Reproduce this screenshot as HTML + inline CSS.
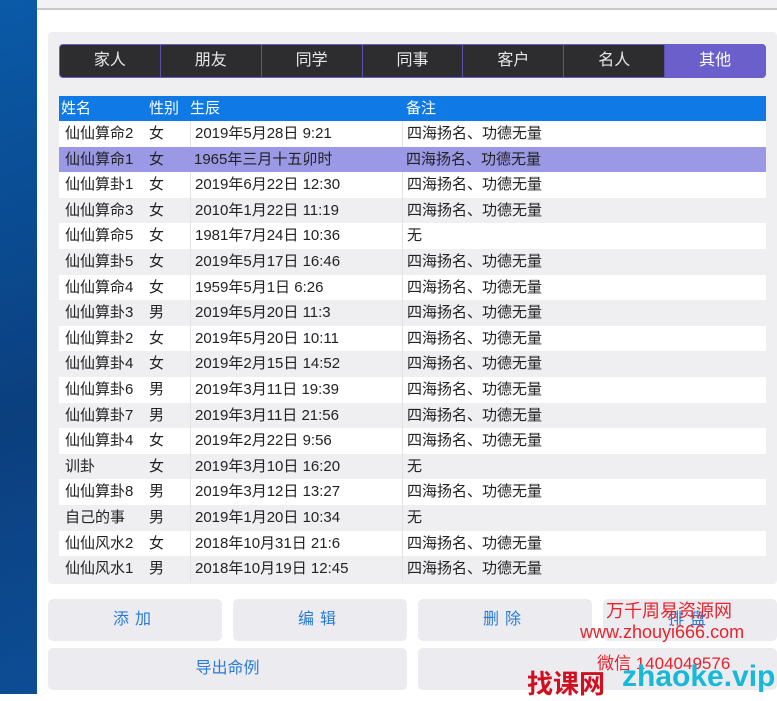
<!DOCTYPE html>
<html><head><meta charset="utf-8"><style>
*{margin:0;padding:0;box-sizing:border-box}
body{width:777px;height:694px;overflow:hidden;background:#fff;position:relative;font-family:"Liberation Sans","Noto Sans CJK SC",sans-serif;}
.left{position:absolute;left:0;top:0;width:37px;height:694px;background:linear-gradient(160deg,#0a5aa8,#0b3f7e 60%,#0d4d95)}
.topbar{position:absolute;left:37px;top:0;right:0;height:10px;background:#f2f2f4;border-bottom:2px solid #c9c9cc}
.panel{position:absolute;left:48px;top:32px;width:729px;height:552px;background:#efeff1;border-radius:4px}
.tabs{position:absolute;left:59px;top:44px;width:707px;height:34px;background:#2d2d30;border:1px solid #6a5fc7;border-radius:4px;display:flex;overflow:hidden}
.tabs div{flex:1;color:#e8e8e8;font-size:16px;text-align:center;line-height:32px;border-left:1px solid #5b52a8}
.tabs div:first-child{border-left:none}
.tabs .on{background:#6a5fcb;color:#fff}
.tbl{position:absolute;left:59px;top:96px;width:707px}
.row{height:25.6px;display:flex;font-size:15px;color:#222;line-height:25.6px;background:#fff}
.row.g{background:#efeff1}
.row.sel{background:#9b98e6}
.row.h{background:#0f7ae5;color:#fff;height:25px;line-height:25px}
.c1{width:86px;padding-left:6px}.c2{width:45px;padding-left:4px}.c3{width:212px;padding-left:4px;border-left:1px solid #e3e3e3}.c4{flex:1;padding-left:4px;border-left:1px solid #e3e3e3}
.row.h div{border:none}
.btn{position:absolute;background:#ececf0;border-radius:5px;color:#2a7bd6;font-size:16px;text-align:center;letter-spacing:6px}
.wm{position:absolute;color:#e8232d;font-size:17px;white-space:nowrap}
</style></head><body>
<div class="left"></div>
<div class="topbar"></div>
<div class="panel"></div>
<div class="tabs"><div>家人</div><div>朋友</div><div>同学</div><div>同事</div><div>客户</div><div>名人</div><div class="on">其他</div></div>
<div class="tbl">
<div class="row h"><div class="c1" style="padding-left:2px">姓名</div><div class="c2">性别</div><div class="c3" style="padding-left:0">生辰</div><div class="c4">备注</div></div>
<div class="row"><div class="c1">仙仙算命2</div><div class="c2">女</div><div class="c3">2019年5月28日 9:21</div><div class="c4">四海扬名、功德无量</div></div>
<div class="row sel"><div class="c1">仙仙算命1</div><div class="c2">女</div><div class="c3" style="border:none">1965年三月十五卯时</div><div class="c4" style="border:none">四海扬名、功德无量</div></div>
<div class="row"><div class="c1">仙仙算卦1</div><div class="c2">女</div><div class="c3">2019年6月22日 12:30</div><div class="c4">四海扬名、功德无量</div></div>
<div class="row g"><div class="c1">仙仙算命3</div><div class="c2">女</div><div class="c3">2010年1月22日 11:19</div><div class="c4">四海扬名、功德无量</div></div>
<div class="row"><div class="c1">仙仙算命5</div><div class="c2">女</div><div class="c3">1981年7月24日 10:36</div><div class="c4">无</div></div>
<div class="row g"><div class="c1">仙仙算卦5</div><div class="c2">女</div><div class="c3">2019年5月17日 16:46</div><div class="c4">四海扬名、功德无量</div></div>
<div class="row"><div class="c1">仙仙算命4</div><div class="c2">女</div><div class="c3">1959年5月1日 6:26</div><div class="c4">四海扬名、功德无量</div></div>
<div class="row g"><div class="c1">仙仙算卦3</div><div class="c2">男</div><div class="c3">2019年5月20日 11:3</div><div class="c4">四海扬名、功德无量</div></div>
<div class="row"><div class="c1">仙仙算卦2</div><div class="c2">女</div><div class="c3">2019年5月20日 10:11</div><div class="c4">四海扬名、功德无量</div></div>
<div class="row g"><div class="c1">仙仙算卦4</div><div class="c2">女</div><div class="c3">2019年2月15日 14:52</div><div class="c4">四海扬名、功德无量</div></div>
<div class="row"><div class="c1">仙仙算卦6</div><div class="c2">男</div><div class="c3">2019年3月11日 19:39</div><div class="c4">四海扬名、功德无量</div></div>
<div class="row g"><div class="c1">仙仙算卦7</div><div class="c2">男</div><div class="c3">2019年3月11日 21:56</div><div class="c4">四海扬名、功德无量</div></div>
<div class="row"><div class="c1">仙仙算卦4</div><div class="c2">女</div><div class="c3">2019年2月22日 9:56</div><div class="c4">四海扬名、功德无量</div></div>
<div class="row g"><div class="c1">训卦</div><div class="c2">女</div><div class="c3">2019年3月10日 16:20</div><div class="c4">无</div></div>
<div class="row"><div class="c1">仙仙算卦8</div><div class="c2">男</div><div class="c3">2019年3月12日 13:27</div><div class="c4">四海扬名、功德无量</div></div>
<div class="row g"><div class="c1">自己的事</div><div class="c2">男</div><div class="c3">2019年1月20日 10:34</div><div class="c4">无</div></div>
<div class="row"><div class="c1">仙仙风水2</div><div class="c2">女</div><div class="c3">2018年10月31日 21:6</div><div class="c4">四海扬名、功德无量</div></div>
<div class="row g"><div class="c1">仙仙风水1</div><div class="c2">男</div><div class="c3">2018年10月19日 12:45</div><div class="c4">四海扬名、功德无量</div></div>
</div>
<div class="btn" style="left:48px;top:599px;width:174px;height:42px;line-height:42px">添加</div>
<div class="btn" style="left:233px;top:599px;width:174px;height:42px;line-height:42px">编辑</div>
<div class="btn" style="left:418px;top:599px;width:174px;height:42px;line-height:42px">删除</div>
<div class="btn" style="left:603px;top:599px;width:174px;height:42px;line-height:42px">排盘</div>
<div class="btn" style="left:48px;top:648px;width:359px;height:42px;line-height:42px;letter-spacing:0">导出命例</div>
<div class="btn" style="left:418px;top:648px;width:359px;height:42px;line-height:42px"></div>
<div class="wm" style="left:606px;top:597px;font-size:18px">万千周易资源网</div>
<div class="wm" style="left:580px;top:622px;font-size:18px">www.zhouyi666.com</div>
<div class="wm" style="left:597px;top:649px;font-size:17px">微信 1404049576</div>
<div class="wm" style="left:527px;top:664px;font-size:26px;font-weight:bold;color:#d01020">找课网</div>
<div class="wm" style="left:622px;top:660px;font-size:30px;color:#17b8d8;font-weight:bold">zhaoke.vip</div>
</body></html>
